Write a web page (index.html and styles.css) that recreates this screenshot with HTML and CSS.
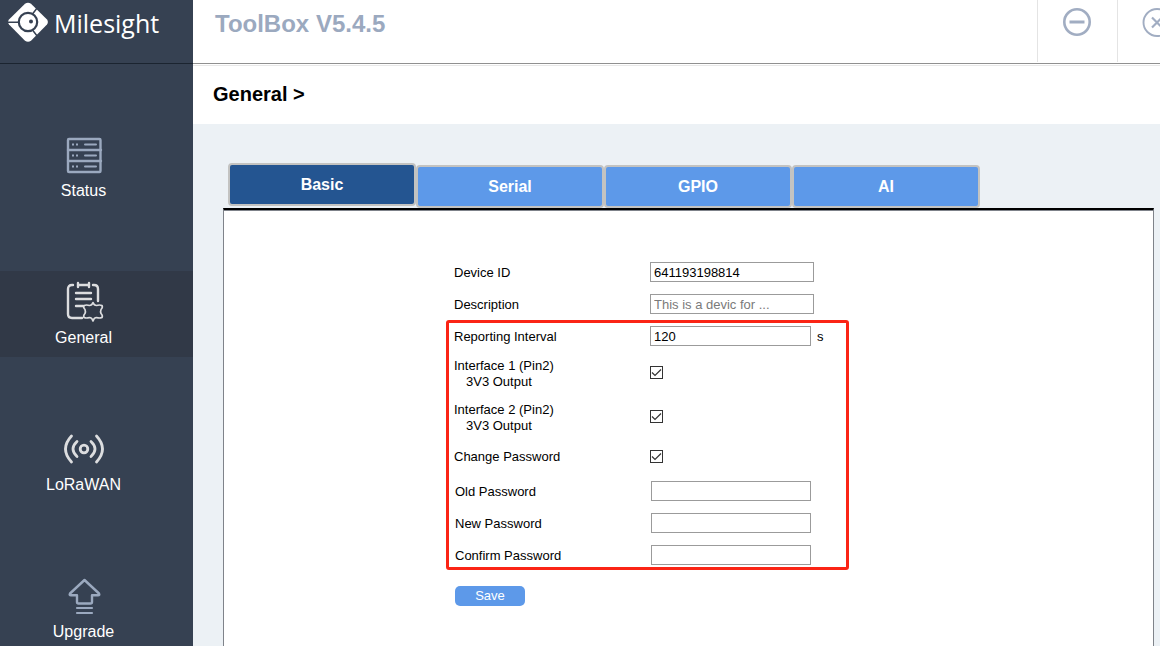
FILE: index.html
```html
<!DOCTYPE html>
<html lang="en">
<head>
<meta charset="utf-8">
<title>ToolBox V5.4.5</title>
<link rel="stylesheet" href="styles.css">
</head>
<body>
<div class="app">
  <aside class="sidebar">
    <div class="brand">
      <svg class="brand-mark" viewBox="0 0 40 40" aria-hidden="true">
        <path fill="#fff" d="M17 1.800q3-2.200 6 0L39 17.500q1.800 2.500 0 5L23 38.700q-3 2.200-6 0L1 22.500q-1.800-2.500 0-5z"/>
        <g fill="none" stroke="#364152">
          <circle cx="20" cy="20" r="9.200" stroke-width="2.200"/>
          <path stroke-width="1.500" d="M0 20.300h11M24.500 12l5-6.500M24.500 28l5 6.500"/>
        </g>
        <circle cx="23" cy="19.500" r="2" fill="#364152"/>
      </svg>
      <span class="brand-name">Milesight</span>
    </div>
    <nav class="nav">
      <a class="nav-item" href="#status">
        <svg class="nav-icon muted" viewBox="0 0 40 40" aria-hidden="true">
          <rect x="4" y="5" width="32.500" height="33" rx="1" stroke-width="2.400"/>
          <path stroke-width="2.400" d="M4 16h33M4 27h33"/>
          <path stroke-width="2" d="M21 10.500h11M21 21.500h11M21 32.500h11"/>
          <path stroke-width="2" stroke-dasharray="2 2" stroke-linecap="butt" d="M8 10.500h6M8 21.500h6M8 32.500h6"/>
        </svg>
        <span>Status</span>
      </a>
      <a class="nav-item active" href="#general" aria-current="page">
        <svg class="nav-icon" viewBox="0 0 40 40" aria-hidden="true">
          <path stroke-width="2.400" d="M9 4H8Q4 4 4 8v25q0 4 4 4h10M29 4h1q4 0 4 4v12"/>
          <path stroke-width="2.400" d="M14 2v4M25 2v4M14 4h11M12 12h15M12 18h15M12 25h7"/>
          <path stroke-width="1.700" d="M29 21.500q1 3 3.500 3 3-1 5.500 0 1 2-1 4-.8 2 0 4 2 2 1 4-2.500 1-5.500 0-2.500 0-3.500 3.500-1-3.500-3.500-3.500-3 1-5.500 0-1-2 1-4 .8-2 0-4-2-2-1-4 2.500-1 5.500 0 2.500 0 3.500-3z"/>
        </svg>
        <span>General</span>
      </a>
      <a class="nav-item" href="#lorawan">
        <svg class="nav-icon" viewBox="0 0 40 40" aria-hidden="true">
          <circle cx="20" cy="21" r="3.800" stroke-width="2.800"/>
          <path stroke-width="2.800" d="M13 13.500q-8 7.500 0 15M27 13.500q8 7.500 0 15M7.500 8q-12 13 0 26M32.500 8q12 13 0 26"/>
        </svg>
        <span>LoRaWAN</span>
      </a>
      <a class="nav-item" href="#upgrade">
        <svg class="nav-icon muted" viewBox="0 0 40 40" aria-hidden="true">
          <path stroke-width="2.400" d="M20.500 5L35 18.500q1 1.700-1 1.700h-6V27q0 1.500-1.500 1.500h-12Q13 28.500 13 27v-6.800H7q-2 0-1-1.700z"/>
          <path stroke-width="2.200" d="M13 33h15M13 38h15"/>
        </svg>
        <span>Upgrade</span>
      </a>
    </nav>
  </aside>

  <div class="main">
    <header class="topbar">
      <h1 class="title">ToolBox V5.4.5</h1>
      <div class="window-controls">
        <button class="window-button" type="button" aria-label="Minimize">
          <svg viewBox="0 0 30 30" aria-hidden="true"><circle cx="15" cy="15" r="12.700" stroke-width="2.600"/><path stroke-width="3" d="M7.500 15h15"/></svg>
        </button>
        <button class="window-button" type="button" aria-label="Close">
          <svg viewBox="0 0 30 30" aria-hidden="true"><circle cx="15" cy="15.500" r="13.500" stroke-width="1.900"/><path stroke-width="2.200" d="M10 10.500l10 10M20 10.500l-10 10"/></svg>
        </button>
      </div>
    </header>
    <h2 class="breadcrumb">General &gt;</h2>

    <main class="content">
      <div class="tabs" role="tablist">
        <button class="tab selected" type="button" role="tab" aria-selected="true">Basic</button>
        <button class="tab" type="button" role="tab" aria-selected="false">Serial</button>
        <button class="tab" type="button" role="tab" aria-selected="false">GPIO</button>
        <button class="tab" type="button" role="tab" aria-selected="false">AI</button>
      </div>
      <div class="panel">
        <form class="form">
          <div class="row">
            <label for="device-id">Device ID</label>
            <input class="field" id="device-id" type="text" value="641193198814">
          </div>
          <div class="row">
            <label for="description">Description</label>
            <input class="field" id="description" type="text" placeholder="This is a devic for ...">
          </div>
          <div class="highlight">
            <div class="row">
              <label for="interval">Reporting Interval</label>
              <input class="field short" id="interval" type="text" value="120">
              <span class="unit">s</span>
            </div>
            <div class="row tall">
              <label for="interface-1">Interface 1 (Pin2)<span class="sub">3V3 Output</span></label>
              <input class="check" id="interface-1" type="checkbox" checked>
            </div>
            <div class="row tall">
              <label for="interface-2">Interface 2 (Pin2)<span class="sub">3V3 Output</span></label>
              <input class="check" id="interface-2" type="checkbox" checked>
            </div>
            <div class="row">
              <label for="change-password">Change Password</label>
              <input class="check" id="change-password" type="checkbox" checked>
            </div>
            <div class="passwords">
              <div class="row">
                <label for="old-password">Old Password</label>
                <input class="field short" id="old-password" type="password">
              </div>
              <div class="row">
                <label for="new-password">New Password</label>
                <input class="field short" id="new-password" type="password">
              </div>
              <div class="row">
                <label for="confirm-password">Confirm Password</label>
                <input class="field short" id="confirm-password" type="password">
              </div>
            </div>
          </div>
          <button class="save" type="button">Save</button>
        </form>
      </div>
    </main>
  </div>
</div>
</body>
</html>
```
FILE: styles.css
```css
* {
  box-sizing: border-box;
}

body {
  margin: 0;
  overflow: hidden;
  background: #fff;
  color: #000;
  font: 13px/16px "Liberation Sans", Arial, sans-serif;
}

button,
input {
  font: inherit;
}

.app {
  display: grid;
  grid-template-columns: 193px minmax(0, 1fr);
  height: 100vh;
}

.sidebar {
  background: #364152;
  overflow: hidden;
}

.brand {
  display: flex;
  align-items: flex-start;
  gap: 6px;
  height: 64px;
  padding: 2px 8px 0;
  border-bottom: 1px solid #1b2430;
}

.brand-mark {
  width: 40px;
  height: 40px;
}

.brand-name {
  color: #fff;
  font: 500 25px/42px "Open Sans", "Noto Sans", sans-serif;
}

.nav {
  display: flex;
  flex-direction: column;
  gap: 61px;
  padding-top: 60px;
}

.nav-item {
  display: flex;
  flex-direction: column;
  align-items: center;
  gap: 7px;
  padding: 10px 26px 9px 0;
  color: #fff;
  font-size: 16px;
  line-height: 20px;
  text-decoration: none;
}

.nav-item.active {
  background: #313947;
}

.nav-icon {
  width: 40px;
  height: 40px;
  overflow: visible;
  fill: none;
  stroke: #dcdddf;
  stroke-linecap: round;
  stroke-linejoin: round;
}

.nav-icon.muted {
  stroke: #9ba9bf;
}

.main {
  display: flex;
  flex-direction: column;
}

.topbar {
  display: flex;
  justify-content: space-between;
  height: 64px;
  padding-left: 22px;
  border-bottom: 1px solid #909090;
  box-shadow: 0 1px 0 #fff, 0 2px 0 #e8e8e8;
}

.title {
  margin: 0;
  color: #9ba9bf;
  font-size: 24px;
  line-height: 48px;
}

.window-controls {
  display: flex;
  height: 62px;
  margin-right: -37px;
}

.window-button {
  width: 80px;
  padding: 0 1px 18px 0;
  border: 0;
  border-left: 1px solid #e4e4e4;
  background: none;
}

.window-button svg {
  display: block;
  width: 30px;
  height: 30px;
  margin: 0 auto;
  fill: none;
  stroke: #a1adc2;
}

.breadcrumb {
  margin: 0;
  padding: 0 20px;
  font-size: 20px;
  line-height: 60px;
}

.content {
  display: flex;
  flex: 1;
  flex-direction: column;
  padding: 39px 6px 0 30px;
  background: #ecf1f5;
}

.tabs {
  display: flex;
  align-items: flex-end;
  padding-left: 5px;
}

.tab {
  width: 188px;
  height: 43px;
  padding: 0;
  border: 2px solid #c3c3c1;
  border-radius: 4px;
  background: #5d99e9;
  color: #fff;
  font-size: 16px;
  font-weight: bold;
}

.tab.selected {
  margin-bottom: 2px;
  background: #245591;
}

.panel {
  flex: 1;
  padding: 52px 0 0 230px;
  border: 1px solid #7f838a;
  border-width: 2px 1px 0;
  border-top-color: #000;
  background: #fff;
  box-shadow: inset 0 1px 0 #7f838a;
}

.form {
  display: flex;
  flex-direction: column;
  gap: 12px;
  width: 360px;
}

.row {
  display: grid;
  grid-template-columns: 196px auto 1fr;
  align-items: center;
  min-height: 20px;
}

.row label,
.unit {
  padding-top: 2px;
}

.row.tall {
  align-items: start;
}

.row.tall label {
  padding-top: 0;
}

.row.tall .check {
  margin-top: 8px;
}

.sub {
  display: block;
  padding-left: 12px;
}

.field {
  width: 164px;
  height: 20px;
  padding: 0 3px;
  border: 1px solid #9b9b9b;
  border-radius: 0;
  background: #fff;
  color: #000;
}

.field::placeholder {
  color: #7a7a7a;
}

.field.short {
  width: 161px;
}

.unit {
  padding-left: 6px;
}

.check {
  appearance: none;
  width: 13px;
  height: 13px;
  margin: 0;
  border: 1px solid #333;
  background: #fff;
}

.check:checked {
  background-image: url("data:image/svg+xml,%3Csvg xmlns='http://www.w3.org/2000/svg' viewBox='0 0 11 11'%3E%3Cpath d='M1 5.500l3 3 6-6' fill='none' stroke='%23333' stroke-width='1.200'/%3E%3C/svg%3E");
}

.highlight {
  display: flex;
  flex-direction: column;
  gap: 12px;
  margin: -6px -35px 0 -8px;
  padding: 3px 5px 2px;
  border: 3px solid #fb2415;
  border-radius: 3px;
}

.passwords {
  display: flex;
  flex-direction: column;
  gap: 12px;
  padding: 3px 0 0 1px;
}

.passwords .field {
  width: 160px;
}

.save {
  width: 70px;
  height: 20px;
  margin: 4px 0 0 1px;
  padding: 0;
  border: 0;
  border-radius: 5px;
  background: #5d99e9;
  color: #fff;
}
```
